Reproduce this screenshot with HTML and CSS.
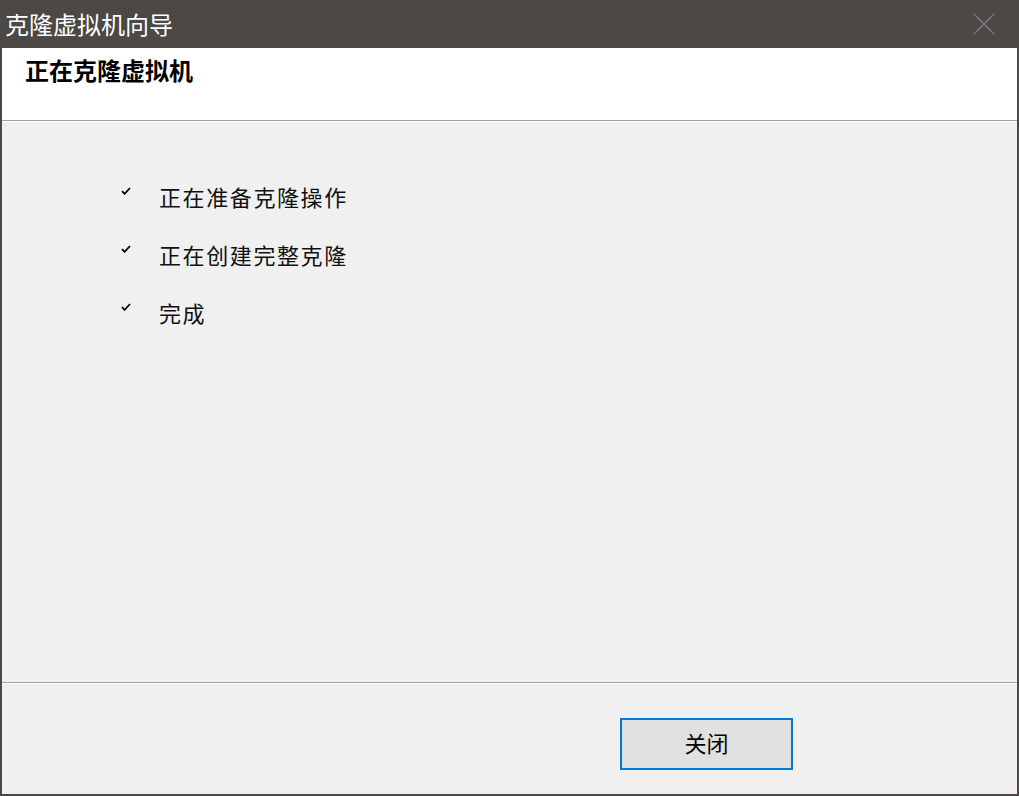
FILE: index.html
```html
<!DOCTYPE html>
<html lang="zh-CN">
<head>
<meta charset="utf-8">
<title>克隆虚拟机向导</title>
<link rel="stylesheet" href="styles.css">
</head>
<body>
<div class="window">
  <div class="titlebar">
    <span class="title">克隆虚拟机向导</span>
    <svg class="close" width="22" height="22" viewBox="0 0 22 22"><path d="M1 1 L21 21 M21 1 L1 21" stroke="#7b7977" stroke-width="1.6" fill="none"/></svg>
  </div>
  <div class="header">正在克隆虚拟机</div>
  <div class="content">
    <div class="step"><svg class="check" width="10" height="8" viewBox="0 0 10 8"><path d="M1 4.2 L3.6 6.8 L9 1" stroke="#000" stroke-width="1.8" fill="none"/></svg><span>正在准备克隆操作</span></div>
    <div class="step"><svg class="check" width="10" height="8" viewBox="0 0 10 8"><path d="M1 4.2 L3.6 6.8 L9 1" stroke="#000" stroke-width="1.8" fill="none"/></svg><span>正在创建完整克隆</span></div>
    <div class="step"><svg class="check" width="10" height="8" viewBox="0 0 10 8"><path d="M1 4.2 L3.6 6.8 L9 1" stroke="#000" stroke-width="1.8" fill="none"/></svg><span>完成</span></div>
  </div>
  <div class="footer">
    <button class="btn">关闭</button>
  </div>
</div>
</body>
</html>
```
FILE: styles.css
```css
html, body {
  margin: 0;
  padding: 0;
}
body {
  font-family: "Noto Sans CJK SC", "Noto Sans", sans-serif;
}
.window {
  width: 1019px;
  height: 796px;
  box-sizing: border-box;
  background: #4b4845;
  padding: 0 2px 2px 2px;
  display: flex;
  flex-direction: column;
}
.titlebar {
  height: 48px;
  margin: 0 -2px;
  display: flex;
  align-items: center;
  justify-content: space-between;
  padding: 0 24px 0 5px;
  box-sizing: border-box;
}
.title {
  color: #ffffff;
  font-size: 24px;
  line-height: 48px;
}
.close {
  display: block;
}
.header {
  background: #ffffff;
  border-bottom: 1px solid #a0a0a0;
  box-shadow: 0 1px 0 #ffffff;
  font-size: 24px;
  font-weight: bold;
  color: #000;
  padding: 7px 0 0 23px;
  line-height: 30px;
  height: 65px;
}
.content {
  flex: 1;
  background: #f0f0f0;
  margin-top: 1px;
  padding: 45px 0 0 119px;
  border-bottom: 1px solid #a0a0a0;
}
.step {
  display: flex;
  align-items: center;
  height: 58px;
}
.check {
  display: block;
  margin: -10px 28px 0 0;
}
.step span {
  font-size: 22px;
  letter-spacing: 1.6px;
  color: #111;
}
.footer {
  height: 111px;
  background: #f0f0f0;
  border-top: 1px solid #ffffff;
  display: flex;
  align-items: flex-start;
  padding: 34px 0 0 618px;
  box-sizing: border-box;
}
.btn {
  width: 173px;
  height: 52px;
  border: 2px solid #0078d7;
  background: #e1e1e1;
  font-family: "Noto Sans CJK SC", sans-serif;
  font-size: 22px;
  line-height: 26px;
  color: #000;
  padding: 0 0 5px 0;
  margin: 0;
}
```
